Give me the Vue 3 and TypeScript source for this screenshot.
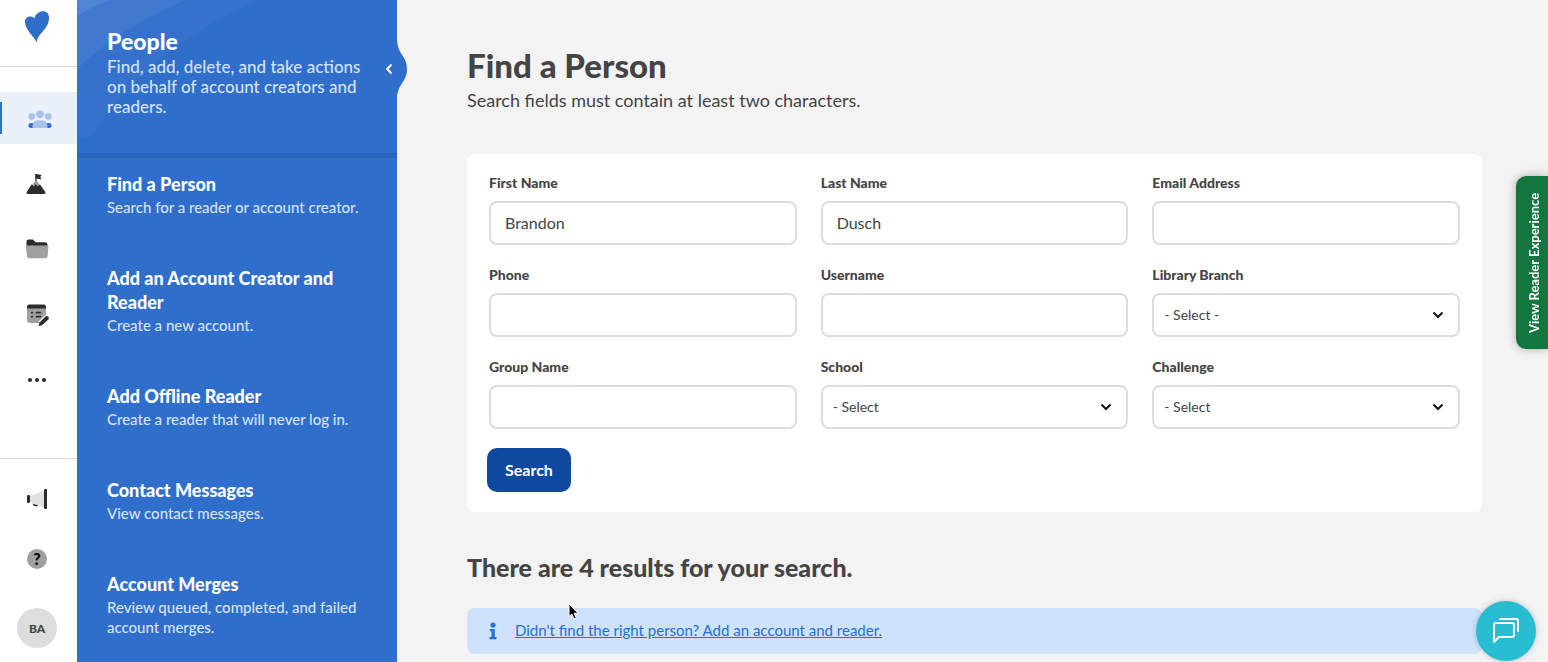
<script setup lang="ts">
import { ref } from 'vue'

interface Field {
  id: string
  label: string
  kind: 'text' | 'select'
  value: string
}

interface PanelLink {
  title: string
  text: string
}

const fields = ref<Field[]>([
  { id: 'first-name', label: 'First Name', kind: 'text', value: 'Brandon' },
  { id: 'last-name', label: 'Last Name', kind: 'text', value: 'Dusch' },
  { id: 'email', label: 'Email Address', kind: 'text', value: '' },
  { id: 'phone', label: 'Phone', kind: 'text', value: '' },
  { id: 'username', label: 'Username', kind: 'text', value: '' },
  { id: 'branch', label: 'Library Branch', kind: 'select', value: '- Select -' },
  { id: 'group', label: 'Group Name', kind: 'text', value: '' },
  { id: 'school', label: 'School', kind: 'select', value: '- Select' },
  { id: 'challenge', label: 'Challenge', kind: 'select', value: '- Select' },
])

const links: PanelLink[] = [
  { title: 'Find a Person', text: 'Search for a reader or account creator.' },
  { title: 'Add an Account Creator and Reader', text: 'Create a new account.' },
  { title: 'Add Offline Reader', text: 'Create a reader that will never log in.' },
  { title: 'Contact Messages', text: 'View contact messages.' },
  { title: 'Account Merges', text: 'Review queued, completed, and failed account merges.' },
]
</script>

<template>
  <div class="app">
    <nav class="rail">
      <a class="logo" href="#">
        <svg width="26" height="34" viewBox="0 0 26 34">
          <path d="M12.5 33C11.500 27 2 22 1 12.500C.5 7 6 4.500 10.500 8C12 3 17 .5 21 1.500C26 3 26 10 23 15.500C19.500 22 13 26 12.500 33Z" fill="#2f6ecb" />
        </svg>
      </a>
      <div class="rail-items">
        <button class="rail-item active" type="button">
          <svg width="24" height="24" viewBox="0 0 24 24">
            <rect x=".5" y="17" width="6" height="5" rx="2.500" fill="#2f6ecb" />
            <rect x="17.500" y="17" width="6" height="5" rx="2.500" fill="#2f6ecb" />
            <circle cx="3.800" cy="10.500" r="3.300" fill="#a8c2ea" />
            <circle cx="20.200" cy="10.500" r="3.300" fill="#a8c2ea" />
            <circle cx="12" cy="8.200" r="4.300" fill="#a8c2ea" stroke="#eaf1fb" stroke-width=".6" />
            <path d="M5.500 22Q4.500 22 4.500 20.500C4.500 17 6.500 14.500 9.500 14.500H14.500C17.500 14.500 19.500 17 19.500 20.500Q19.500 22 18.500 22Z" fill="#a8c2ea" />
          </svg>
        </button>
        <button class="rail-item" type="button">
          <svg width="24" height="24" viewBox="0 0 24 24">
            <path d="M10.200 3H11.500L16.500 4L15.300 6L16.500 8.500L11.500 7.600V11H10.200Z" fill="#2b2d2d" />
            <path d="M10.500 9.500L6 15.500L8.800 16.500L10.500 14.500L12.500 16.500L15.500 15.500L12 9.500Z" fill="#9c9e9e" />
            <path d="M6.500 13.500L9 15.500L10.700 13L12.500 15.500L15 13.500L20 20.500C21 22 20.500 23 19 23H3C1.500 23 1 22 2 20.500Z" fill="#2b2d2d" />
          </svg>
        </button>
        <button class="rail-item" type="button">
          <svg width="24" height="24" viewBox="0 0 24 24">
            <path d="M1.500 10V5.500Q1.500 3.500 3.500 3.500H8L10.500 6.200H20Q22.500 6.200 22.500 8.500V10Z" fill="#2b2d2d" />
            <path d="M1 9.500H23.500L22.700 19.500Q22.500 22.200 20 22.200H4.500Q2 22.200 1.800 19.500Z" fill="#9fa1a1" />
          </svg>
        </button>
        <button class="rail-item" type="button">
          <svg width="24" height="26" viewBox="0 0 24 26">
            <rect x="2" y="5" width="19" height="18" rx="3" fill="#9fa1a1" />
            <path d="M2 8.500V7Q2 4.500 4.500 4.500H18.500Q21 4.500 21 7V8.500Z" fill="#2b2d2d" />
            <path d="M6.800 12.700H7.300M11.500 12.700H15.500M6.800 16.700H7.300M11.500 16.700H15.500" stroke="#2b2d2d" stroke-width="1.800" stroke-linecap="round" />
            <path d="M15.800 23.700L22.500 17.200" stroke="#fff" stroke-width="6" />
            <path d="M13.500 26L14.500 22.500L20.500 16.500Q22 15.500 23.300 16.800Q24.300 18 23.300 19.500L17 25.300Z" fill="#2b2d2d" />
          </svg>
        </button>
        <button class="rail-item" type="button">
          <svg width="24" height="24" viewBox="0 0 24 24">
            <g fill="#2b2d2d"><circle cx="5" cy="14" r="2.100" /><circle cx="12" cy="14" r="2.100" /><circle cx="19" cy="14" r="2.100" /></g>
          </svg>
        </button>
      </div>
      <div class="rail-bottom">
        <button class="rail-small" type="button">
          <svg width="22" height="22" viewBox="0 0 22 22">
            <path d="M4 8L18 2.500V19.500L4 14Z" fill="#dfe0e0" />
            <rect x="1" y="7" width="3" height="8" rx="1.200" fill="#2b2d2d" />
            <rect x="18" y="1" width="3" height="20" rx="1" fill="#2b2d2d" />
            <path d="M6.500 15.500C7.500 18.500 11 19 12.500 17.500Z" fill="#2b2d2d" />
          </svg>
        </button>
        <button class="rail-small" type="button"><span class="help">?</span></button>
        <button class="avatar" type="button">BA</button>
      </div>
    </nav>

    <aside class="panel">
      <header class="panel-head">
        <svg class="arcs" width="320" height="137" viewBox="0 0 320 137">
          <path d="M0 0H180Q70 50 13 137H0Z" fill="#fff" fill-opacity=".03" />
          <path d="M0 0H108Q40 30 0 69Z" fill="#fff" fill-opacity=".05" />
          <path d="M0 0H32Q14 7 0 16Z" fill="#fff" fill-opacity=".09" />
        </svg>
        <h2>People</h2>
        <p>Find, add, delete, and take actions on behalf of account creators and readers.</p>
        <button class="collapse" type="button" aria-label="Collapse">
          <svg width="22" height="62" viewBox="0 0 22 62">
            <path d="M11 0C11 17 21 17 21 31S11 45 11 62Z" fill="#306ecc" />
            <path d="M5.500 26.500L1.200 31L5.500 35.500" fill="none" stroke="#fff" stroke-width="2" />
          </svg>
        </button>
      </header>
      <nav class="panel-nav">
        <a v-for="link in links" :key="link.title" class="panel-link" href="#">
          <strong>{{ link.title }}</strong>
          <span>{{ link.text }}</span>
        </a>
      </nav>
    </aside>

    <main class="content">
      <h1>Find a Person</h1>
      <p class="hint">Search fields must contain at least two characters.</p>

      <form class="card" @submit.prevent>
        <div class="grid">
          <div v-for="field in fields" :key="field.id" class="field">
            <label :for="field.id">{{ field.label }}</label>
            <input v-if="field.kind === 'text'" :id="field.id" v-model="field.value" type="text" />
            <div v-else class="select">
              <select :id="field.id" v-model="field.value">
                <option>{{ field.value }}</option>
              </select>
              <svg width="12" height="8" viewBox="0 0 12 8">
                <path d="M1.500 1.500L6 6L10.500 1.500" fill="none" stroke="#111" stroke-width="2" />
              </svg>
            </div>
          </div>
        </div>
        <button class="search" type="submit">Search</button>
      </form>

      <h2 class="results">There are 4 results for your search.</h2>
      <div class="notice">
        <svg width="8" height="18" viewBox="0 0 8 18">
          <circle cx="4" cy="3" r="2.600" fill="#2470d8" />
          <path d="M.8 7H5.800V15H7.500V17.200H.5V15H2.500V9.200H.8Z" fill="#2470d8" />
        </svg>
        <a href="#">Didn't find the right person? Add an account and reader.</a>
      </div>
    </main>

    <button class="reader-tab" type="button">View Reader Experience</button>
    <button class="chat" type="button" aria-label="Chat">
      <svg width="28" height="28" viewBox="0 0 28 28" fill="none" stroke="#fff" stroke-width="2" stroke-linejoin="round" stroke-linecap="round">
        <path d="M4 6H20Q22 6 22 8V18Q22 20 20 20H7L2 25V8Q2 6 4 6Z" />
        <path d="M8 2H24Q26 2 26 4V14" />
      </svg>
    </button>
    <svg class="cursor" width="12" height="18" viewBox="0 0 12 18">
      <path d="M1 1V13.500L3.800 11L6 16L8.200 15L6.100 10.200H10Z" fill="#000" stroke="#fff" stroke-width="1" />
    </svg>
  </div>
</template>

<style>
body {
  margin: 0;
}
</style>

<style scoped>
.app {
  display: flex;
  min-height: 100vh;
  background: #f3f3f3;
  color: #444;
  font-family: Lato, "Open Sans", sans-serif;
}
.app *,
.app {
  box-sizing: border-box;
}
button,
input,
select {
  font-family: inherit;
}
button {
  border: 0;
  padding: 0;
  background: none;
  cursor: pointer;
}
h1,
h2,
p {
  margin: 0;
}
a {
  text-decoration: none;
}
.rail {
  flex: none;
  width: 77px;
  display: flex;
  flex-direction: column;
  background: #fff;
}
.logo {
  display: flex;
  justify-content: center;
  height: 67px;
  padding: 10px 3px 0 0;
  border-bottom: 1px solid #ddd;
}
.rail-items {
  display: flex;
  flex-direction: column;
  gap: 13px;
  padding-top: 25px;
}
.rail-item {
  display: flex;
  align-items: center;
  justify-content: center;
  height: 52px;
  padding-right: 3px;
}
.rail-item.active {
  background: #eaf1fb;
  padding: 0 0 0 2px;
  position: relative;
}
.rail-item.active::before {
  content: "";
  position: absolute;
  left: 0;
  top: 10px;
  width: 2px;
  height: 32px;
  background: #2f6ecb;
}
.rail-bottom {
  margin-top: auto;
  display: flex;
  flex-direction: column;
  align-items: center;
  gap: 20px;
  padding: 20px 3px 14px 0;
  border-top: 1px solid #ddd;
}
.rail-small {
  display: flex;
  align-items: center;
  justify-content: center;
  width: 40px;
  height: 40px;
}
.help {
  width: 20px;
  height: 20px;
  border-radius: 50%;
  background: #9fa1a1;
  color: #000;
  font-size: 16px;
  line-height: 20px;
  font-weight: 900;
}
.avatar {
  width: 40px;
  height: 40px;
  margin-top: 9px;
  border-radius: 50%;
  background: #ddd;
  color: #444;
  font-size: 12px;
  font-weight: 900;
}
.panel {
  flex: none;
  width: 320px;
  background: #306ecc;
  color: #fff;
}
.panel-head {
  position: relative;
  height: 158px;
  padding: 27px 30px 0;
  border-bottom: 5px solid #2a64ba;
}
.arcs {
  position: absolute;
  left: 0;
  top: 0;
}
.panel-head h2 {
  position: relative;
  font-size: 23px;
  line-height: 28px;
  font-weight: 900;
}
.panel-head p {
  position: relative;
  margin-top: 2px;
  font-size: 17px;
  line-height: 20px;
  font-weight: 500;
  color: #d5e3f8;
}
.collapse {
  position: absolute;
  top: 38px;
  right: -11px;
  display: flex;
}
.panel-nav {
  display: flex;
  flex-direction: column;
  gap: 49px;
  padding: 14px 30px 24px;
}
.panel-link {
  display: flex;
  flex-direction: column;
  gap: 1px;
  color: #fff;
}
.panel-link strong {
  font-size: 18px;
  line-height: 24px;
  font-weight: 900;
}
.panel-link span {
  font-size: 15px;
  line-height: 20px;
  font-weight: 500;
  color: #d5e3f8;
}
.content {
  flex: 1;
  min-width: 0;
  padding: 45px 66px 8px 70px;
}
h1 {
  font-size: 33px;
  line-height: 40px;
  font-weight: 900;
}
.hint {
  margin-top: 3px;
  font-size: 18px;
  line-height: 24px;
}
.card {
  margin-top: 42px;
  padding: 19px 20px 20px;
  border-radius: 8px;
  background: #fff;
}
.grid {
  display: grid;
  grid-template-columns: repeat(3, minmax(0, 1fr));
  gap: 20px 24px;
  padding: 0 2px;
}
.field {
  display: flex;
  flex-direction: column;
  gap: 8px;
}
label {
  font-size: 14px;
  line-height: 20px;
  font-weight: 900;
}
input,
select {
  width: 100%;
  height: 44px;
  border: 2px solid #ddd;
  border-radius: 8px;
  background: #fff;
  color: #444;
}
input {
  padding: 0 14px 2px;
  font-size: 16px;
}
select {
  appearance: none;
  padding: 0 36px 2px 10px;
  font-size: 14px;
}
.select {
  display: grid;
  align-items: center;
}
.select > * {
  grid-area: 1 / 1;
}
.select svg {
  justify-self: end;
  margin-right: 16px;
  pointer-events: none;
}
.search {
  display: block;
  height: 44px;
  margin-top: 19px;
  padding: 0 18px 2px;
  border-radius: 10px;
  background: #0f499f;
  color: #fff;
  font-size: 16px;
  font-weight: 700;
}
.results {
  margin-top: 39px;
  font-size: 25px;
  line-height: 32px;
  font-weight: 900;
}
.notice {
  display: flex;
  align-items: center;
  gap: 18px;
  height: 46px;
  margin-top: 25px;
  padding: 0 22px;
  border-radius: 8px;
  background: #cfe2fb;
}
.notice a {
  color: #2470d8;
  font-size: 15px;
  line-height: 20px;
  padding-bottom: 2px;
  text-decoration: underline;
}
.reader-tab {
  position: fixed;
  right: 0;
  top: 176px;
  width: 32px;
  height: 173px;
  padding-right: 4px;
  border-radius: 0 10px 10px 0;
  background: #13763f;
  color: #fff;
  box-shadow: 0 0 10px rgba(0, 0, 0, 0.3);
  font-size: 13px;
  font-weight: 700;
  writing-mode: vertical-rl;
  transform: rotate(180deg);
}
.chat {
  position: fixed;
  right: 12px;
  bottom: 1px;
  display: flex;
  align-items: center;
  justify-content: center;
  width: 60px;
  height: 60px;
  border-radius: 50%;
  background: #29bdd2;
  box-shadow: 0 0 5px 1px rgba(0, 0, 0, 0.15);
}
.cursor {
  position: fixed;
  left: 568px;
  top: 603px;
}
</style>
